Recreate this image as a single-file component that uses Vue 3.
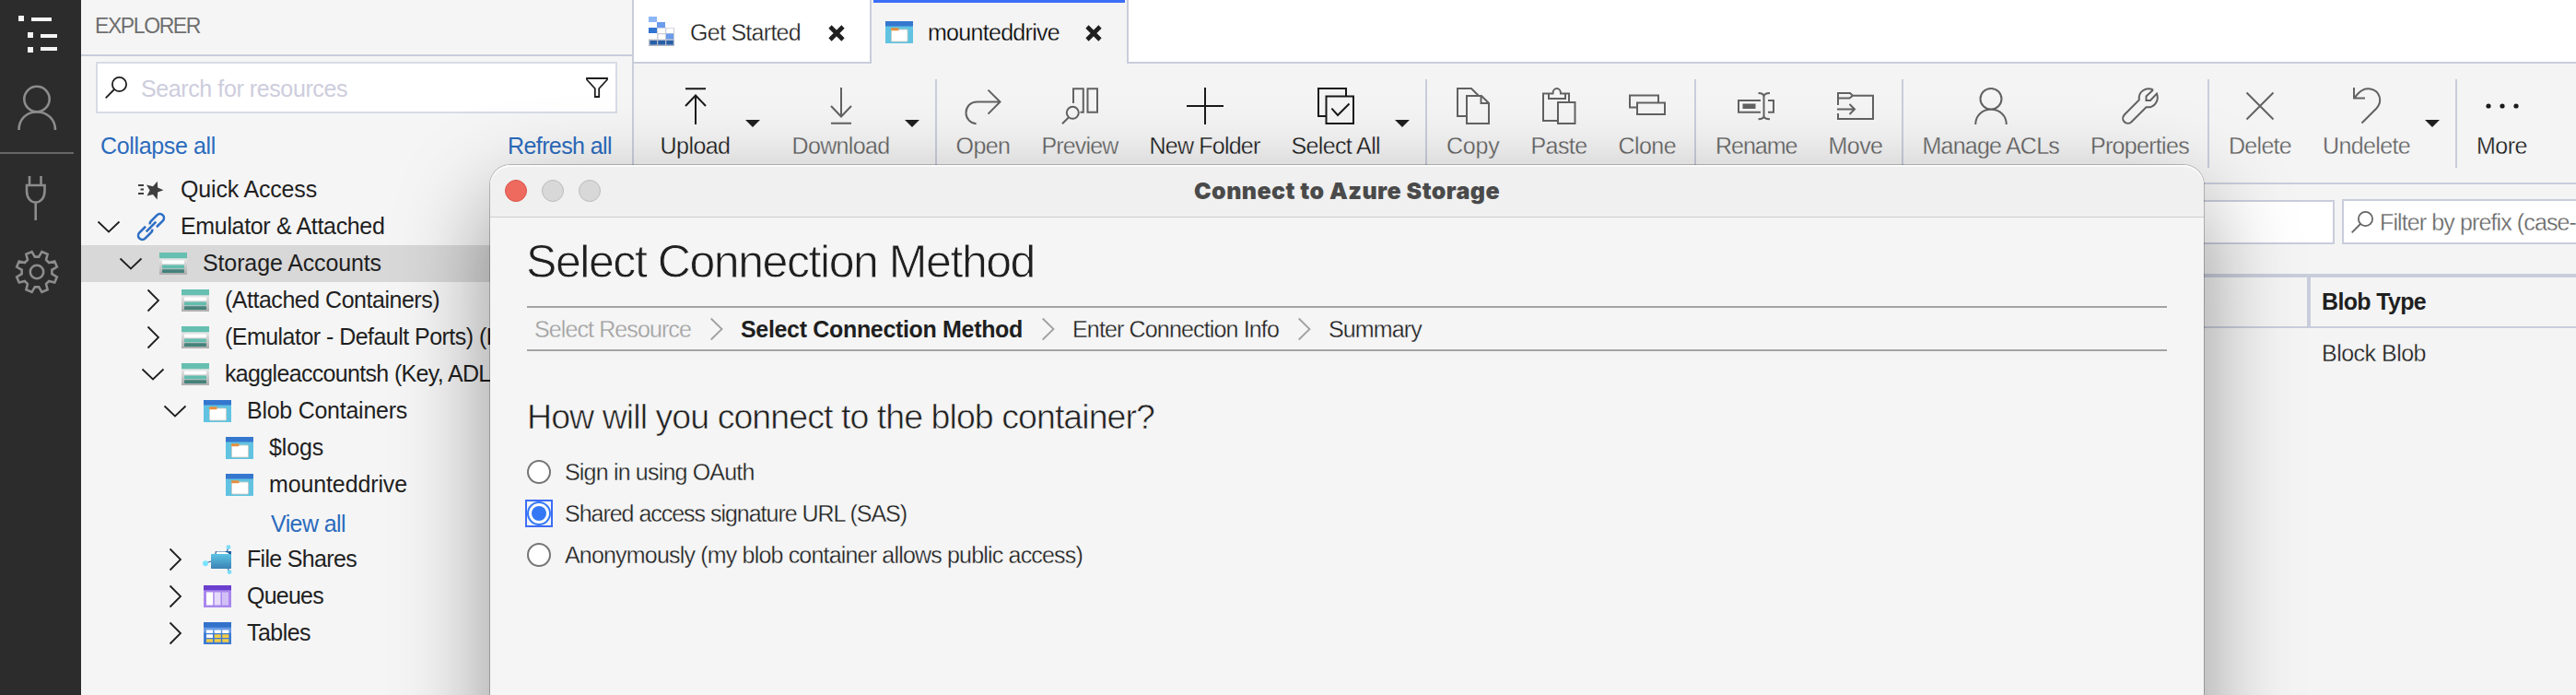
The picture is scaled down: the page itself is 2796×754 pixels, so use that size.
<script setup>
// Spreads letters so that a label takes exactly the given width.
const vFit = {
  mounted(el, { value }) {
    const count = el.textContent.length
    const natural = el.getBoundingClientRect().width
    el.style.letterSpacing = (value - natural) / count + 'px'
  },
}

const toothed = () => {
  const pts = []
  for (let k = 0; k < 8; k++) {
    const a = 22.5 + 45 * k
    for (const [da, r] of [[-15, 16.5], [-8.5, 22.5], [8.5, 22.5], [15, 16.5]]) {
      const t = ((a + da) * Math.PI) / 180
      pts.push((24 + r * Math.sin(t)).toFixed(2) + ',' + (24 - r * Math.cos(t)).toFixed(2))
    }
  }
  return pts.join(' ')
}
const gear = toothed()

const tree = [
  { text: 'Quick Access', depth: 0, icon: 'star', w: 148 },
  { text: 'Emulator & Attached', depth: 0, icon: 'link', open: true, w: 221.5 },
  { text: 'Storage Accounts', depth: 1, icon: 'storage', open: true, selected: true, w: 194 },
  { text: '(Attached Containers)', depth: 2, icon: 'storage', closed: true, w: 233 },
  { text: '(Emulator - Default Ports) (Key)', depth: 2, icon: 'storage', closed: true, w: 333 },
  { text: 'kaggleaccountsh (Key, ADLS Gen2)', depth: 2, icon: 'storage', open: true, w: 377 },
  { text: 'Blob Containers', depth: 3, icon: 'blob', open: true, w: 174 },
  { text: '$logs', depth: 4, icon: 'blob', w: 59 },
  { text: 'mounteddrive', depth: 4, icon: 'blob', w: 150 },
  { text: 'View all', depth: 4, more: true, w: 81 },
  { text: 'File Shares', depth: 3, icon: 'share', closed: true, w: 119 },
  { text: 'Queues', depth: 3, icon: 'queue', closed: true, w: 83 },
  { text: 'Tables', depth: 3, icon: 'table', closed: true, w: 69 },
]

const toolbar = [
  { text: 'Upload', w: 76, on: true, caret: true, d: 'M9 1.2H31M20 8V40M9 20L20 8.5L31 20' },
  { text: 'Download', w: 106, caret: true, d: 'M9 38.8H31M20 0V31M9 20L20 31.5L31 20' },
  { sep: true, tight: true },
  { text: 'Open', w: 59, d: 'M38.5 15.5H14C5.500 15.500 1.500 21.500 1.500 27.500C1.500 33.500 6 38.500 12.600 39.300M25.500 2.600L38.500 15.500L25.500 28.600' },
  { text: 'Preview', w: 83, d: 'M13 17V1.200H23.800V26.800H20.500M28.500 1.200H39V26.800H28.500ZM1 39.300L8 32.200M18.800 27.300A6.500 6.500 0 1 1 5.800 27.300A6.500 6.500 0 1 1 18.800 27.300Z' },
  { text: 'New Folder', w: 120, on: true, d: 'M20 0V40M0 20H40' },
  { text: 'Select All', w: 96.5, on: true, caret: true, d: 'M9 31H1V1H31V9M9.500 9.500H39V39H9.500ZM15.400 22.700L22 30L34.500 17.500' },
  { sep: true, tight: true },
  { text: 'Copy', w: 57.5, d: 'M13 31H3V1H18L26 9M13 9H29L37 17V39H13ZM28.500 9V17H37' },
  { text: 'Paste', w: 61, d: 'M19 36H3V6.500H9M27 6.500H31V16M9 6.500H13.500C13.500 -.800 22 -.800 22 6.500H27V12H9ZM19 16H37.500V39H19Z' },
  { text: 'Clone', w: 62.5, d: 'M8 21.500H1V8.500H32V16M9 16.500H39V29H9Z' },
  { sep: true },
  { text: 'Rename', w: 88.5, d: 'M25 14H1V26.800H25M5.500 18.400H19.500M5.500 20.200H19.500M5.500 22H19.500M22.500 6C26.500 6 28.500 7.500 28.500 10V30.500C28.500 33 26.500 34.300 22.500 34.300M35 6C31 6 28.500 7.500 28.500 10M35 34.300C31 34.300 28.500 33 28.500 30.500M33 14H39V26.800H33' },
  { text: 'Move', w: 59, d: 'M1 19V6H14L17 8.800H39V34H1V28M1 11.500H13.500L17 8.800M0 23.500H19M13.500 18L19 23.500L13.500 29' },
  { sep: true },
  { text: 'Manage ACLs', w: 148.5, d: 'M31.500 12.300A11.500 11.300 0 1 1 8.500 12.300A11.500 11.300 0 1 1 31.500 12.300ZM3.200 40C3.200 31 10 23.800 20 23.800S36.800 31 36.800 40' },
  { text: 'Properties', w: 107, d: 'M34 2.500L26.500 9.500V14H31L38 6.500C41 14.500 35 22.500 26.500 21.200L10.500 37.200C5 42 -2 35 2.800 29.500L18.800 13.500C17.500 5 26 -1.500 34 2.500' },
  { sep: true },
  { text: 'Delete', w: 68, d: 'M5.500 5.500L34.500 34.500M34.500 5.500L5.500 34.500' },
  { text: 'Undelete', w: 95, caret: true, d: 'M6 0V11.500H18M6 11.500L10.500 6.500C15 1.500 20 .800 24 1.500C34 3.500 37.500 14.500 30.500 22.500L14.500 38.500' },
  { sep: true, tight: true },
  { text: 'More', w: 55, on: true, dots: true },
]

const crumbs = [
  { text: 'Select Resource', w: 170, kind: 'past' },
  { text: 'Select Connection Method', w: 306, kind: 'now' },
  { text: 'Enter Connection Info', w: 224, kind: 'next' },
  { text: 'Summary', w: 101, kind: 'next' },
]

const methods = [
  { text: 'Sign in using OAuth', w: 205.5 },
  { text: 'Shared access signature URL (SAS)', w: 371, checked: true },
  { text: 'Anonymously (my blob container allows public access)', w: 562 },
]
</script>

<template>
  <div class="window">
    <nav class="rail">
      <svg class="rail-icons" width="88" height="340" viewBox="0 0 88 340" fill="none">
        <g fill="#f4f4f4">
          <rect x="20" y="17" width="6" height="6" /><rect x="34" y="19" width="22" height="4" />
          <rect x="30" y="35" width="6" height="6" /><rect x="44" y="37" width="18" height="4" />
          <rect x="30" y="51" width="6" height="6" /><rect x="44" y="51" width="18" height="4" />
        </g>
        <g stroke="#8c8c8c" stroke-width="2.600">
          <ellipse cx="40" cy="107.500" rx="13.700" ry="13.700" />
          <path d="M20.500 141C20.500 130 28 121.500 40 121.500S60 130 60 141" />
          <path d="M32 191V201M44.500 191V201M29 201H48.500V207C48.500 215 44 219.500 38.700 219.500S29 215 29 207ZM38.700 219.500V239" />
          <g transform="translate(16 271)">
            <polygon :points="gear" />
            <circle cx="24" cy="24" r="7.200" />
          </g>
        </g>
        <rect x="0" y="165" width="80" height="2" fill="#666" />
      </svg>
    </nav>

    <aside class="sidebar">
      <header class="side-head"><span v-fit="114">EXPLORER</span></header>
      <div class="search">
        <svg width="24" height="24" viewBox="0 0 24 24" fill="none" stroke="#1f1f1f" stroke-width="1.800"><circle cx="15.500" cy="8.500" r="7.600" /><path d="M10 14L.7 23.300" /></svg>
        <span v-fit="224" class="placeholder">Search for resources</span>
        <svg width="24" height="24" viewBox="0 0 24 24" fill="none" stroke="#1f1f1f" stroke-width="1.800"><path d="M1 2H23V3.500L14.200 13V22H9.800V13L1 3.500Z" /></svg>
      </div>
      <div class="links"><a v-fit="125">Collapse all</a><a v-fit="113">Refresh all</a></div>
      <ul class="tree">
        <li v-for="n in tree" :key="n.text" class="node" :class="{ selected: n.selected, viewall: n.more }" :style="{ paddingLeft: 18 + 24 * n.depth + 'px' }">
          <span class="twist">
            <svg v-if="n.open" width="24" height="24" viewBox="0 0 24 24" fill="none" stroke="#1f1f1f" stroke-width="1.800"><path d="M.5 6.500L12 17.500L23.500 6.500" /></svg>
            <svg v-if="n.closed" width="24" height="24" viewBox="0 0 24 24" fill="none" stroke="#1f1f1f" stroke-width="1.800"><path d="M6.500 .5L18 12L6.500 23.500" /></svg>
          </span>
          <span class="glyph">
            <svg v-if="n.icon === 'storage'" width="30" height="24" viewBox="0 0 30 24">
              <defs><linearGradient id="steel" x1="0" y1="0" x2="0" y2="1"><stop offset="0" stop-color="#eeeeee" /><stop offset="1" stop-color="#acacac" /></linearGradient></defs>
              <rect y="5" width="30" height="19" fill="url(#steel)" /><rect width="30" height="6.300" fill="#66bfb0" />
              <rect x="3" y="8.500" width="24" height="3.800" rx=".8" fill="#fff" /><rect x="3" y="13.500" width="24" height="3.800" rx=".8" fill="#62bdae" /><rect x="3" y="18.300" width="24" height="3.800" rx=".8" fill="#44827b" />
            </svg>
            <svg v-else-if="n.icon === 'blob'" width="30" height="24" viewBox="0 0 30 24">
              <rect width="30" height="24" fill="#61c3e1" /><rect width="30" height="5.500" fill="#3577cf" />
              <rect x="6.500" y="9" width="18" height="13" rx=".8" fill="#fff" stroke="#cfcabf" stroke-width=".8" /><rect x="6" y="7.200" width="8.500" height="3" rx="1" fill="#e88f3c" />
            </svg>
            <svg v-else-if="n.icon === 'queue'" width="30" height="24" viewBox="0 0 30 24">
              <rect width="30" height="24" fill="#a987ee" /><rect width="30" height="5.300" fill="#6b3fce" />
              <rect x="3" y="7.500" width="7.200" height="14" fill="#fff" /><rect x="11.700" y="7.500" width="6.800" height="14" fill="#e6dafb" /><rect x="20" y="7.500" width="7" height="14" fill="#d3bff7" />
            </svg>
            <svg v-else-if="n.icon === 'table'" width="30" height="24" viewBox="0 0 30 24">
              <rect width="30" height="24" fill="#3d7bd3" /><rect y="5.500" width="30" height="6" fill="#6a9ce6" /><rect width="30" height="5.500" fill="#3272cb" />
              <path fill="#fff" d="M3 8.500h7v3.600H3zM11.700 8.500h7v3.600h-7zM20.300 8.500h7v3.600h-7zM3 13.300h7v3.600H3z" />
              <path fill="#f4cd45" d="M11.700 13.300h7v3.600h-7zM20.300 13.300h7v3.600h-7zM3 18.200h7v3.600H3zM11.700 18.200h7v3.600h-7zM20.300 18.200h7v3.600h-7z" />
            </svg>
            <svg v-else-if="n.icon === 'share'" width="32" height="32" viewBox="0 0 32 32">
              <defs><linearGradient id="sea" x1="0" y1="0" x2="0" y2="1"><stop offset="0" stop-color="#5cc3e4" /><stop offset="1" stop-color="#3b82b4" /></linearGradient></defs>
              <path d="M3 20L12 17M28 3L26 8M29 29L27 25" stroke="#2f68a8" stroke-width="1.200" />
              <path d="M14 7H31V16H12Z" fill="#22609f" /><path d="M15 7.500H24L28 9V13H14Z" fill="#fff" />
              <rect x="9" y="10" width="22" height="16" rx=".8" fill="url(#sea)" />
              <circle cx="28" cy="2.600" r="2.400" fill="#7cdcf8" /><circle cx="3" cy="20.200" r="3" fill="#7ce4ff" /><circle cx="29" cy="29.600" r="2.400" fill="#7cdcf8" />
            </svg>
            <svg v-else-if="n.icon === 'star'" width="30" height="24" viewBox="0 0 30 24">
              <path d="M1 7H7M3.500 11.500H7M1 16H7" stroke="#3f3f3f" stroke-width="1.800" />
              <path fill="#3f3f3f" d="M21.800 2.800L22.200 9.600L28.500 12.200L22.200 14.600L21.600 22.500L17 17L10.500 18.500L13.600 12.600L10 6.400L17 8.200Z" />
            </svg>
            <svg v-else-if="n.icon === 'link'" width="30" height="30" viewBox="0 0 30 30" fill="none" stroke="#2f6fc4" stroke-width="2.600">
              <g transform="rotate(-45 15 15)"><path d="M11 10.600H1.500A4.400 4.400 0 0 0 1.500 19.400H11A4 4 0 0 0 14 17.700M19 19.400H28.500A4.400 4.400 0 0 0 28.500 10.600H19A4 4 0 0 0 16 12.300M7.500 15H22.500" /></g>
            </svg>
          </span>
          <span v-fit="n.w" class="label">{{ n.text }}</span>
        </li>
      </ul>
    </aside>

    <main class="main">
      <div class="tabs">
        <div class="tab first">
          <svg width="28" height="32" viewBox="0 0 28 32">
            <rect y="24.500" width="28" height="7.500" fill="#b3b9c6" /><path fill="#c9cdd6" d="M9 12h19v13H9z" />
            <path fill="#fff" d="M10 12.700h8v5.300h-8zM19.300 12.700H27v5.300h-7.700zM10.500 19.300H18v5.200h-7.500z" />
            <rect width="9" height="6" fill="#8db6f7" /><rect x="9" y="6" width="9" height="6" fill="#6a9bec" /><rect y="12" width="9" height="6" fill="#2f74d2" /><rect x="19" y="18.500" width="8" height="6" fill="#6a9bec" />
            <path fill="#275fa8" d="M1.500 26H9v4.600H1.500zM10.300 26H18v4.600h-7.700zM19.300 26h7.500v4.600h-7.500z" />
          </svg>
          <span v-fit="120" class="light on-white">Get Started</span>
          <svg width="18" height="16" viewBox="0 0 18 16" stroke="#1f1f1f" stroke-width="4.600"><path d="M2 1L16 15M16 1L2 15" /></svg>
        </div>
        <div class="tab active">
          <svg width="30" height="24" viewBox="0 0 30 24">
            <rect width="30" height="24" fill="#61c3e1" /><rect width="30" height="5.500" fill="#3577cf" />
            <rect x="6.500" y="9" width="17.500" height="13" rx=".8" fill="#fff" stroke="#cfcabf" stroke-width=".8" /><rect x="6" y="7.200" width="8.500" height="3" rx="1" fill="#e88f3c" />
          </svg>
          <span v-fit="143" class="light">mounteddrive</span>
          <svg width="18" height="16" viewBox="0 0 18 16" stroke="#1f1f1f" stroke-width="4.600"><path d="M2 1L16 15M16 1L2 15" /></svg>
        </div>
        <div class="tab-rest"></div>
      </div>

      <div class="toolbar">
        <template v-for="(t, i) in toolbar" :key="i">
          <i v-if="t.sep" class="sep" :class="{ tight: t.tight }"></i>
          <template v-else>
            <button class="tool" :class="{ on: t.on }">
              <svg width="40" height="40" viewBox="0 0 40 40" fill="none" stroke="currentColor" stroke-width="2">
                <g v-if="t.dots" fill="currentColor" stroke="none"><circle cx="5" cy="20" r="2.600" /><circle cx="20" cy="20" r="2.600" /><circle cx="35" cy="20" r="2.600" /></g>
                <path v-else :d="t.d" />
              </svg>
              <span v-fit="t.w" class="light">{{ t.text }}</span>
            </button>
            <span v-if="t.caret" class="caret"><svg width="16" height="8" viewBox="0 0 16 8"><path d="M0 0H16L8 8Z" fill="#1f1f1f" /></svg></span>
          </template>
        </template>
      </div>

      <div class="filters">
        <div class="field path"></div>
        <div class="field prefix">
          <svg width="24" height="24" viewBox="0 0 24 24" fill="none" stroke="#666" stroke-width="1.800"><circle cx="15.500" cy="8.500" r="7.600" /><path d="M10 14L.7 23.300" /></svg>
          <span v-fit="213" class="light on-white">Filter by prefix (case-</span>
        </div>
      </div>

      <div class="grid">
        <div class="cell head"></div>
        <div class="cell head type"><b v-fit="113">Blob Type</b></div>
        <div class="cell"></div>
        <div class="cell value"><span v-fit="113" class="light">Block Blob</span></div>
      </div>
    </main>

    <section class="dialog">
      <header class="titlebar">
        <div class="lights"><i class="red"></i><i></i><i></i></div>
        <strong v-fit="332">Connect to Azure Storage</strong>
      </header>
      <div class="body">
        <h1><span v-fit="552">Select Connection Method</span></h1>
        <div class="crumbs">
          <template v-for="(c, i) in crumbs" :key="c.text">
            <svg v-if="i" width="14" height="24" viewBox="0 0 14 24" fill="none" stroke="#a0a0a0" stroke-width="1.800"><path d="M.7 .5L12.500 12L.7 23.500" /></svg>
            <span v-fit="c.w" :class="[c.kind, { light: c.kind !== 'now' }]">{{ c.text }}</span>
          </template>
        </div>
        <h2><span v-fit="681">How will you connect to the blob container?</span></h2>
        <div v-for="m in methods" :key="m.text" class="method" :class="{ checked: m.checked }">
          <span class="ring"><i></i></span>
          <span v-fit="m.w" class="light">{{ m.text }}</span>
        </div>
      </div>
    </section>
  </div>
</template>

<style>
html,
body {
  margin: 0;
  overflow: hidden;
}
</style>

<style scoped>
.window {
  position: relative;
  display: flex;
  width: 2796px;
  height: 754px;
  overflow: hidden;
  background: #f5f5f5;
  color: #1f1f1f;
  font: 25px/28px "Liberation Sans", Arial, sans-serif;
  white-space: nowrap;
}
svg {
  display: block;
  flex: none;
  overflow: visible;
}
span,
a,
b,
strong {
  display: inline-block;
  flex: none;
}
.light {
  -webkit-text-stroke: 0.3px #f5f5f5;
}
.on-white {
  -webkit-text-stroke-color: #fff;
}
.rail {
  flex: none;
  width: 88px;
  background: #2c2c2c;
}
.sidebar {
  flex: none;
  box-sizing: border-box;
  width: 600px;
  border-right: 2px solid #c9cddb;
}
.side-head {
  box-sizing: border-box;
  height: 61px;
  padding: 14px 0 0 15px;
  border-bottom: 2px solid #c9cddb;
  color: #6e6e6e;
  font-size: 23px;
}
.search {
  display: flex;
  align-items: center;
  box-sizing: border-box;
  width: 566px;
  height: 56px;
  margin: 6px 0 0 16px;
  padding: 0 8px;
  border: 2px solid #d8dbe6;
  background: #fff;
}
.placeholder {
  margin: 2px auto 0 15px;
  color: #cdcddd;
}
.links {
  display: flex;
  justify-content: space-between;
  margin-top: 21px;
  padding: 0 22px 0 21px;
  color: #2b6bbd;
}
.tree {
  margin: 14px 0 0;
  padding: 0;
  list-style: none;
}
.node {
  display: flex;
  align-items: center;
  height: 40px;
  overflow: hidden;
}
.node.selected {
  background: #d8d8d8;
}
.twist {
  width: 24px;
}
.glyph {
  display: flex;
  justify-content: center;
  width: 30px;
  margin-left: 19px;
}
.label {
  margin: 0 0 2px 17px;
}
.viewall {
  height: 41px;
  color: #2b6bbd;
}
.viewall .label {
  margin: 2px 0 0 19px;
}
.main {
  flex: 1;
  min-width: 0;
  background: #f4f4f4;
}
.tabs {
  display: flex;
  height: 69px;
}
.tab {
  display: flex;
  align-items: center;
  box-sizing: border-box;
  border-right: 2px solid #c9cddb;
}
.first {
  width: 258px;
  gap: 17px;
  padding: 0 0 0 16px;
  border-bottom: 2px solid #c9cddb;
  background: #fff;
}
.first svg:last-child {
  margin: 5px 0 0 13px;
}
.first span {
  margin-top: 2px;
}
.active {
  position: relative;
  width: 279px;
  gap: 16px;
  padding: 0 0 0 15px;
  color: #000;
}
.active::before {
  position: absolute;
  top: 0;
  right: 2px;
  left: 2px;
  height: 3px;
  background: #3c6df6;
  content: "";
}
.active svg:last-child {
  margin: 3px 0 0 12px;
}
.tab-rest {
  flex: 1;
  border-bottom: 2px solid #c9cddb;
  background: #fff;
}
.toolbar {
  display: flex;
  box-sizing: border-box;
  height: 131px;
  padding: 17px 0 0 11.5px;
  border-bottom: 2px solid #c9cddb;
}
.tool {
  display: flex;
  flex: none;
  flex-direction: column;
  align-items: center;
  gap: 9px;
  height: 96px;
  margin: 0;
  padding: 9px 17px 0;
  border: 0;
  background: none;
  color: #626262;
  font: inherit;
}
.on {
  color: #1a1a1a;
}
.caret {
  width: 34px;
  margin-left: -1px;
  padding-top: 44px;
}
.sep {
  flex: none;
  width: 2px;
  height: 96px;
  margin: 0 4px 0 3px;
  background: #c9cddb;
}
.tight {
  margin-left: -1px;
}
.filters {
  display: flex;
  align-items: flex-end;
  gap: 8px;
  height: 65px;
}
.field {
  flex: none;
  box-sizing: border-box;
  height: 48px;
  border: 2px solid #c9cddb;
  background: #fff;
}
.path {
  width: 1846px;
}
.prefix {
  display: flex;
  align-items: center;
  gap: 7px;
  width: 300px;
  height: 49px;
  padding-left: 8px;
  color: #666;
}
.grid {
  display: grid;
  grid-template-columns: 1816px 1fr;
  margin-top: 32px;
  border-top: 4px solid #c9cddb;
}
.cell {
  height: 53px;
}
.head {
  border-bottom: 2px solid #c9cddb;
}
.type {
  box-sizing: border-box;
  height: 55px;
  padding: 12px 0 0 12px;
  border-left: 4px solid #c9cddb;
}
.value {
  padding: 13px 0 0 16px;
}
.dialog {
  position: absolute;
  top: 179px;
  left: 532px;
  width: 1860px;
  height: 1100px;
  border-radius: 22px;
  background: #f5f5f5;
  box-shadow: 0 0 0 1px rgba(0, 0, 0, 0.22), 0 36px 100px rgba(0, 0, 0, 0.4);
}
.titlebar {
  position: relative;
  display: flex;
  align-items: center;
  justify-content: center;
  box-sizing: border-box;
  height: 57px;
  border-bottom: 1px solid #cfcfcf;
  border-radius: 22px 22px 0 0;
  background: #f0f0f0;
  box-shadow: inset 0 2px 0 #fafafa;
  color: #4a4a4a;
  font: 700 25px/30px Inter, sans-serif;
}
.lights {
  position: absolute;
  top: 16px;
  left: 16px;
  display: flex;
  gap: 16px;
}
.lights i {
  box-sizing: border-box;
  width: 24px;
  height: 24px;
  border: 1px solid #bcbcbc;
  border-radius: 50%;
  background: #d8d8d8;
}
.lights .red {
  border-color: #d9564b;
  background: #ee6a5f;
}
.body {
  padding: 0 40px;
}
h1,
h2 {
  margin: 0;
  font-weight: 400;
}
h1 {
  height: 96px;
  margin-left: -1px;
  font-size: 50px;
  line-height: 97px;
  -webkit-text-stroke: 0.8px #f5f5f5;
}
.crumbs {
  display: flex;
  align-items: center;
  gap: 21px;
  box-sizing: border-box;
  height: 49px;
  padding-left: 8px;
  border: solid #a3a3a3;
  border-width: 2px 0;
}
.crumbs svg {
  margin-right: -2px;
}
.past {
  color: #a0a0a0;
}
.now {
  font-weight: 700;
}
h2 {
  margin: 50px 0 0;
  font-size: 37.5px;
  line-height: 42px;
  -webkit-text-stroke: 0.6px #f5f5f5;
}
.method {
  position: relative;
  display: flex;
  align-items: center;
  gap: 15px;
  height: 45px;
}
h2 + .method {
  margin-top: 16px;
}
.ring {
  display: flex;
  align-items: center;
  justify-content: center;
  box-sizing: border-box;
  width: 26px;
  height: 26px;
  border: 2px solid #767676;
  border-radius: 50%;
  background: #fff;
}
.checked .ring {
  border-color: #3478f6;
}
.checked .ring i {
  width: 16px;
  height: 16px;
  border-radius: 50%;
  background: #3478f6;
}
.checked::before {
  position: absolute;
  top: 8px;
  left: -2px;
  box-sizing: border-box;
  width: 30px;
  height: 30px;
  border: 2px solid #3c6df6;
  content: "";
}
</style>
